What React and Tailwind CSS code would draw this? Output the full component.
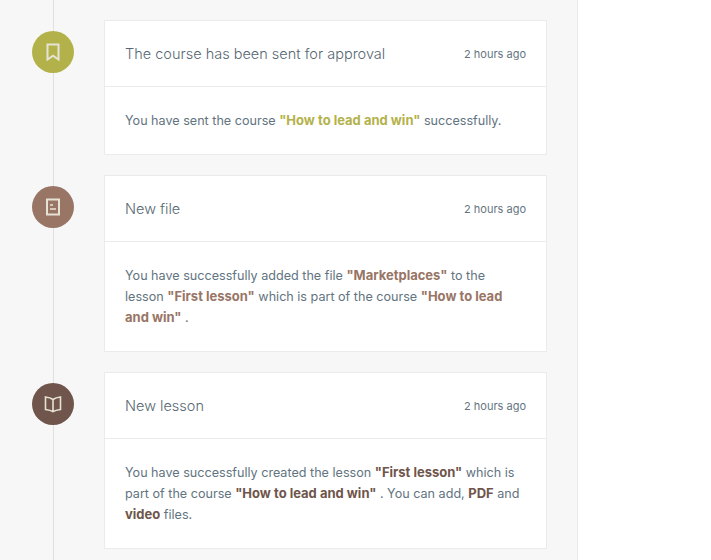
import React from 'react';

const BookmarkIcon = () => (
    <svg width="16" height="18" viewBox="0 0 16 18" fill="none" stroke="currentColor" strokeWidth="2">
        <path d="M2.500 1.500h11v15L8 12.700 2.500 16.500z" />
    </svg>
);

const FileIcon = () => (
    <svg width="16" height="18" viewBox="0 0 16 18" fill="none" stroke="currentColor" strokeWidth="2">
        <rect x="2" y="1.500" width="12" height="15" />
        <path d="M5 7h3M5 11h6" strokeWidth="1.500" />
    </svg>
);

const BookIcon = () => (
    <svg width="18" height="17" viewBox="0 0 18 17" fill="none" stroke="currentColor" strokeWidth="1.600">
        <path d="M9 3.500C7.200 2.200 4.800 1.400 1.500 1v12.500c3.300.4 5.700 1 7.500 2.200 1.800-1.200 4.200-1.800 7.500-2.200V1C13.200 1.400 10.800 2.200 9 3.500zM9 3.500v12" />
    </svg>
);

const Strong = ({ color, children }) => (
    <b className={`text-[13px] font-bold ${color}`}>{children}</b>
);

const Item = ({ icon, circle, title, height, children }) => (
    <div className="flex items-start">
        <div className={`w-[42px] h-[42px] rounded-full flex items-center justify-center mt-[11px] ml-[32px] mr-[30px] shrink-0 relative text-[#e6e3d6] ${circle}`}>
            {icon}
        </div>
        <div className={`w-[443px] bg-white border border-[#ebebeb] ${height}`}>
            <div className="h-[66px] flex items-center justify-between pl-5 pr-5 border-b border-[#ebebeb]">
                <span className="text-[14.500px] font-light text-[#566872]">{title}</span>
                <span className="text-[11px] mt-0.5 text-[#65757f]">2 hours ago</span>
            </div>
            <div className="px-5 pt-[23px] text-[12.600px] leading-[21px] text-[#627480]">
                {children}
            </div>
        </div>
    </div>
);

export default function App() {
    return (
        <div className="w-[711px] h-[560px] overflow-hidden bg-white font-['Inter',sans-serif]">
            <div className="relative w-[578px] h-[560px] bg-[#f7f7f7] border-r border-[#ebebeb] pt-5 flex flex-col gap-5">
                <div className="absolute left-[53px] top-0 bottom-0 w-px bg-[#e0e0e0]" />
                <Item icon={<BookmarkIcon />} circle="bg-[#b3b24a]" title="The course has been sent for approval" height="h-[135px]">
                    You have sent the course <Strong color="text-[#b3b24a]">"How to lead and win"</Strong> successfully.
                </Item>
                <Item icon={<FileIcon />} circle="bg-[#987565]" title="New file" height="h-[177px]">
                    You have successfully added the file <Strong color="text-[#987565]">"Marketplaces"</Strong> to the lesson <Strong color="text-[#987565]">"First lesson"</Strong> which is part of the course <Strong color="text-[#987565]">"How to lead and win"</Strong> .
                </Item>
                <Item icon={<BookIcon />} circle="bg-[#6f554b]" title="New lesson" height="h-[177px]">
                    You have successfully created the lesson <Strong color="text-[#6f554b]">"First lesson"</Strong> which is part of the course <Strong color="text-[#6f554b]">"How to lead and win"</Strong> . You can add, <Strong color="text-[#6f554b]">PDF</Strong> and <Strong color="text-[#6f554b]">video</Strong> files.
                </Item>
            </div>
        </div>
    );
}
